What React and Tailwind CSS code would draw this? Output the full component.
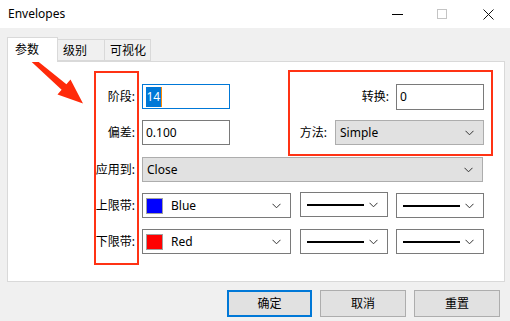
import React from "react";

const font = { fontFamily: '"Noto Sans", "Noto Sans CJK SC", sans-serif' };

function Chevron() {
  return (
    <svg width="9" height="6" viewBox="0 0 9 6" className="shrink-0">
      <path d="M0.5 0.8 L4.5 4.8 L8.5 0.8" fill="none" stroke="#333" strokeWidth="1" />
    </svg>
  );
}

function Label({ children, w = "w-[128px]" }) {
  return <div className={`${w} text-right text-[12px] text-black leading-none pr-[1px]`}>{children}</div>;
}

function ColorSelect({ color, name }) {
  return (
    <div className="w-[149px] h-[25px] border border-[#7a7a7a] bg-white flex items-center pl-[3px] pr-[9px]">
      <div className="w-[17px] h-[16px] border border-[#a0a0a0] flex items-center justify-center">
        <div className="w-[15px] h-[14px]" style={{ background: color }} />
      </div>
      <span className="ml-[8px] text-[12px] flex-1">{name}</span>
      <Chevron />
    </div>
  );
}

function LineSelect({ raised }) {
  return (
    <div className={`w-[88px] h-[25px] border border-[#7a7a7a] bg-white flex items-center pl-[6px] pr-[9px] ${raised ? "-mt-[2px]" : ""}`}>
      <div className="w-[57px] h-[2px] bg-black" />
      <div className="flex-1" />
      <Chevron />
    </div>
  );
}

export default function App() {
  return (
    <div className="relative w-[510px] h-[321px] bg-[#f0f0f0] overflow-hidden text-black" style={font}>
      {/* title bar */}
      <div className="h-[28px] bg-white flex items-center pl-[8px]">
        <span className="text-[12px] flex-1">Envelopes</span>
        <div className="w-[11px] h-[1px] bg-black mr-[34px]" />
        <div className="w-[10px] h-[10px] border border-[#c4c4c4] mr-[36px]" />
        <svg width="11" height="11" viewBox="0 0 11 11" className="mr-[16px]">
          <path d="M0.5 0.5 L10.5 10.5 M10.5 0.5 L0.5 10.5" stroke="#111" strokeWidth="1" />
        </svg>
      </div>

      {/* tabs */}
      <div className="relative h-[33px] pl-[7px] pt-[9px] flex items-end">
        <div className="relative z-10 w-[51px] h-[25px] bg-white border border-b-0 border-[#d9d9d9] text-[12px] pl-[7px] pt-[3px] -mb-[1px]">参数</div>
        <div className="w-[47px] h-[22px] border border-l-0 border-[#d9d9d9] text-[12px] pl-[5px] pt-[2px]">级别</div>
        <div className="w-[46px] h-[22px] border border-l-0 border-[#d9d9d9] text-[12px] pl-[5px] pt-[2px]">可视化</div>
      </div>

      {/* panel */}
      <div className="ml-[7px] w-[498px] h-[221px] bg-white border border-[#d9d9d9] pt-[22px]">
        <div className="flex items-center h-[25px]">
          <Label>阶段:</Label>
          <div className="ml-[6px] w-[88px] h-[25px] border border-[#0078d7] flex items-center pl-[3px]">
            <span className="bg-[#0078d7] text-white text-[12px] leading-[20px] px-[0.5px]">14</span>
            <div className="w-[1px] h-[20px] bg-[#ff8a00]" />
          </div>
          <div className="flex-1" />
          <div className="text-[12px] mr-[7px]">转换:</div>
          <div className="w-[88px] h-[26px] border border-[#7a7a7a] flex items-center pl-[3px] text-[12px] mr-[20px]">0</div>
        </div>
        <div className="flex items-center h-[25px] mt-[11px]">
          <Label>偏差:</Label>
          <div className="ml-[6px] w-[88px] h-[25px] border border-[#7a7a7a] flex items-center pl-[3px] text-[12px]">0.100</div>
          <div className="flex-1" />
          <div className="text-[12px] mr-[8px]">方法:</div>
          <div className="w-[149px] h-[25px] border border-[#adadad] bg-[#e1e1e1] flex items-center pl-[4px] pr-[9px] text-[12px] mr-[20px]">
            <span className="flex-1">Simple</span>
            <Chevron />
          </div>
        </div>
        <div className="flex items-center h-[25px] mt-[12px]">
          <Label>应用到:</Label>
          <div className="ml-[6px] w-[341px] h-[25px] border border-[#adadad] bg-[#e1e1e1] flex items-center pl-[4px] pr-[9px] text-[12px]">
            <span className="flex-1">Close</span>
            <Chevron />
          </div>
        </div>
        <div className="flex items-center h-[25px] mt-[11px]">
          <Label>上限带:</Label>
          <div className="ml-[6px] flex items-center gap-[9px]">
            <ColorSelect color="#0000ff" name="Blue" />
            <div className="flex items-center gap-[8px]">
              <LineSelect raised />
              <LineSelect />
            </div>
          </div>
        </div>
        <div className="flex items-center h-[25px] mt-[11px]">
          <Label>下限带:</Label>
          <div className="ml-[6px] flex items-center gap-[9px]">
            <ColorSelect color="#ff0000" name="Red" />
            <div className="flex items-center gap-[8px]">
              <LineSelect />
              <LineSelect />
            </div>
          </div>
        </div>
      </div>

      {/* buttons */}
      <div className="flex justify-end gap-[8px] pr-[10px] mt-[8px]">
        <div className="w-[85px] h-[27px] border-2 border-[#0078d7] bg-[#e1e1e1] flex items-center justify-center text-[12px]">确定</div>
        <div className="w-[86px] h-[27px] border border-[#adadad] bg-[#e1e1e1] flex items-center justify-center text-[12px]">取消</div>
        <div className="w-[86px] h-[27px] border border-[#adadad] bg-[#e1e1e1] flex items-center justify-center text-[12px]">重置</div>
      </div>

      {/* annotations */}
      <div className="absolute left-[94px] top-[71px] w-[45px] h-[194px] border-2 border-[#ff3214] pointer-events-none" />
      <div className="absolute left-[288px] top-[70px] w-[205px] h-[86px] border-2 border-[#ff3214] pointer-events-none" />
      <svg className="absolute left-0 top-0 pointer-events-none" width="510" height="321" viewBox="0 0 510 321">
        <polygon
          points="25.8,56.4 28.2,53.6 66.4,84.2 70.5,79.5 83,103.5 57.5,94.5 61.6,89.8"
          fill="#ff2a0a"
        />
      </svg>
    </div>
  );
}
